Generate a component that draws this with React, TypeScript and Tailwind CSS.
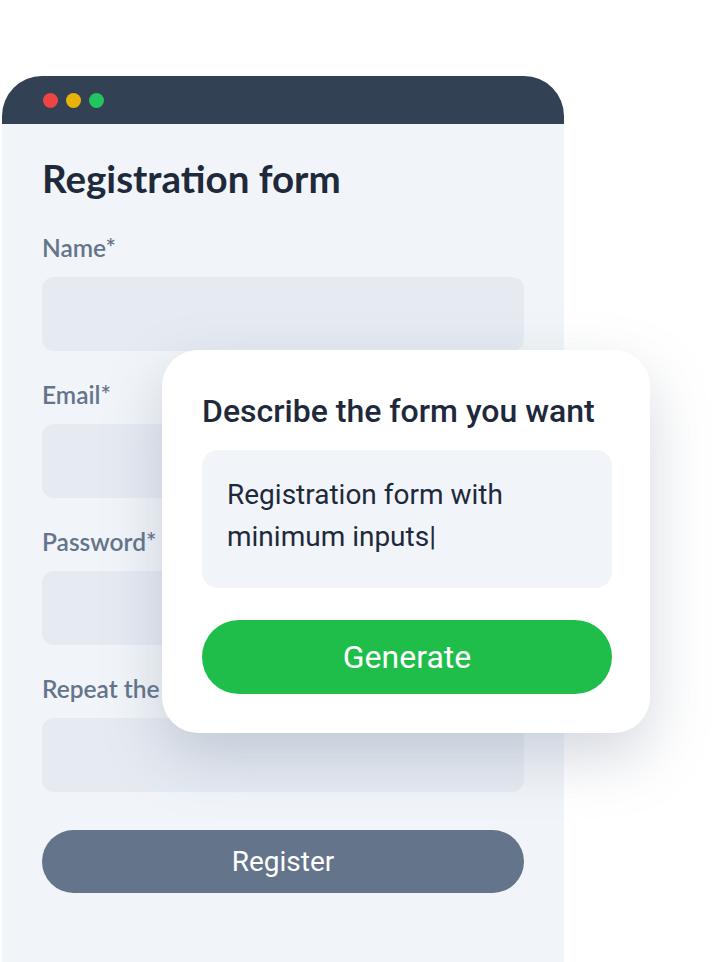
import React from "react";

const fields = ["Name*", "Email*", "Password*", "Repeat the password*"];

// Overlay prompt card
const PromptCard = () => (
  <div className="absolute left-[162px] top-[350px] w-[488px] rounded-[36px] bg-white px-[40px] pt-[40px] pb-[39px] shadow-[0_24px_60px_rgba(100,116,139,0.28)] font-['Roboto',sans-serif]">
    <h2 className="text-[32px] leading-[42px] font-medium text-[#1e293b] whitespace-nowrap">Describe the form you want</h2>
    <div className="mt-[18px] h-[138px] w-[410px] rounded-[16px] bg-[#f1f5f9] px-[25px] pt-[24px] text-[28px] leading-[42px] text-[#1e293b]">
      Registration form with
      <br />
      minimum inputs|
    </div>
    <button className="mt-[32px] flex h-[74px] w-[410px] items-center justify-center rounded-full bg-[#1fbe4b] text-[32px] font-normal text-white">
      Generate
    </button>
  </div>
);

export default function App() {
  return (
    <div className="relative h-[962px] w-[722px] overflow-hidden bg-white">
      <div className="ml-[2px] mt-[76px] w-[562px] overflow-hidden rounded-t-[40px] bg-[#f1f5f9]">
        {/* title bar */}
        <div className="flex h-[48px] items-center gap-[8px] bg-[#334155] pl-[41px]">
          <span className="h-[15px] w-[15px] rounded-full bg-[#ef4444]" />
          <span className="h-[15px] w-[15px] rounded-full bg-[#eab308]" />
          <span className="h-[15px] w-[15px] rounded-full bg-[#22c55e]" />
        </div>

        <div className="flex flex-col px-[40px] pt-[31px] pb-[69px]">
          <h1 className="font-['Lato',sans-serif] text-[38.5px] leading-[46px] font-bold text-[#1e293b]">Registration form</h1>
          <div className="mt-[32px] flex flex-col gap-[29px]">
            {fields.map((f) => (
              <div key={f}>
                <div className="font-['Lato',sans-serif] text-[24.5px] leading-[30px] font-semibold text-[#64748b] whitespace-nowrap">{f}</div>
                <div className="mt-[14px] h-[74px] w-[482px] rounded-[12px] bg-[#e6ebf2]" />
              </div>
            ))}
          </div>
          <button className="mt-[38px] flex h-[63px] w-[482px] items-center justify-center rounded-full bg-[#64748b] font-['Roboto',sans-serif] text-[28px] font-normal text-white">
            Register
          </button>
        </div>
      </div>
      <PromptCard />
    </div>
  );
}
